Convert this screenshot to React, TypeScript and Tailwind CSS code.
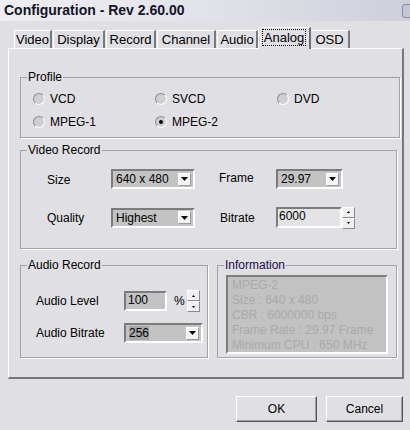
import React from 'react';

const tabs = [
  { label: 'Video', w: 38 },
  { label: 'Display', w: 52 },
  { label: 'Record', w: 50 },
  { label: 'Channel', w: 59 },
  { label: 'Audio', w: 41 },
  { label: 'Analog', w: 53, active: true },
  { label: 'OSD', w: 40 },
];

const Radio = ({ label, checked }: { label: string; checked?: boolean }) => (
  <div className="flex items-center h-[17px]">
    <div className="w-[12px] h-[12px] rounded-full border border-t-[#8c8c8c] border-l-[#8c8c8c] border-b-white border-r-white bg-[#cfcfd2] flex items-center justify-center">
      {checked && <div className="w-[4px] h-[4px] rounded-full bg-black" />}
    </div>
    <span className="ml-[5px]">{label}</span>
  </div>
);

const Arrow = () => (
  <div className="w-[13px] h-[13px] bg-[#f4f4f4] border border-t-white border-l-white border-b-[#9a9a9a] border-r-[#9a9a9a] flex items-center justify-center">
    <svg width="7" height="4" viewBox="0 0 7 4"><path d="M0 0h7L3.5 4z" fill="#000" /></svg>
  </div>
);

const Combo = ({ value, w, selected }: { value: string; w: number; selected?: boolean }) => (
  <div
    className="h-[20px] border-2 border-t-[#7c7c7c] border-l-[#7c7c7c] border-b-white border-r-white bg-[#c3c3c3] flex items-center justify-between pl-[3px] pr-[2px]"
    style={{ width: w }}
  >
    <span className={selected ? 'bg-[#a6a6a6] leading-[14px]' : 'leading-[14px]'}>{value}</span>
    <Arrow />
  </div>
);

const Spin = () => (
  <div className="flex flex-col w-[13px] shrink-0">
    {[0, 1].map((i) => (
      <div key={i} className="h-[11px] bg-[#f0f0f0] border border-t-white border-l-white border-b-[#8a8a8a] border-r-[#8a8a8a] flex items-center justify-center">
        <svg width="3" height="2" viewBox="0 0 3 2">
          <path d={i === 0 ? 'M0 2h3L1.5 0z' : 'M0 0h3L1.5 2z'} fill="#000" />
        </svg>
      </div>
    ))}
  </div>
);

const Group = ({ title, className, children, titleClass }: { title: string; className?: string; children: React.ReactNode; titleClass?: string }) => (
  <fieldset className={`border border-[#a2a2a6] shadow-[1px_1px_0_#ffffff] shrink-0 ${className ?? ''}`}>
    <legend className={`ml-[6px] px-[1px] leading-[14px] ${titleClass ?? ''}`}>{title}</legend>
    {children}
  </fieldset>
);

export default function App() {
  return (
    <div className="w-[410px] h-[430px] overflow-hidden bg-[#e0dfe3] text-[12px] text-black font-['Liberation_Sans',Arial,sans-serif]">
      <div className="h-[21px] bg-gradient-to-r from-[#eeeef2] via-[#e2e2ea] to-[#cfcfda] flex items-center justify-between pl-[4px]">
        <span className="font-bold text-[14px] text-[#141428]">Configuration - Rev 2.60.00</span>
        <div className="w-[14px] h-[14px] rounded-[3px] border border-[#8a8aa6] bg-[#c6c6d6] mr-[-6px]" />
      </div>

      <div className="flex items-end h-[27px] pl-[14px] pt-[6px]">
        {tabs.map((t) =>
          t.active ? (
            <div
              key={t.label}
              className="h-[22px] -mb-[1px] mx-[-1px] relative z-10 bg-[#e0dfe3] border-t border-l border-t-white border-l-white border-r-2 border-r-[#6e6e6e] flex items-start justify-center pt-[2px] text-[13px]"
              style={{ width: t.w }}
            >
              <span className="outline outline-1 outline-dotted outline-black px-[1px] leading-[15px]">{t.label}</span>
            </div>
          ) : (
            <div
              key={t.label}
              className="h-[18px] mr-[1px] border-t border-l border-t-white border-l-white border-r-2 border-r-[#7a7a7a] flex items-center justify-center text-[13px]"
              style={{ width: t.w }}
            >
              {t.label}
            </div>
          )
        )}
      </div>

      <div className="ml-[8px] w-[396px] h-[331px] border-t border-l border-t-white border-l-white border-r-2 border-b-2 border-r-[#777777] border-b-[#777777] pl-[11px] pr-[5px] pt-[21px]">
        <Group title="Profile" className="h-[68px] w-[377px]">
          <div className="grid grid-cols-[122px_122px_122px] gap-y-[6px] pl-[12px] pt-[6px]">
            <Radio label="VCD" />
            <Radio label="SVCD" />
            <Radio label="DVD" />
            <Radio label="MPEG-1" />
            <Radio label="MPEG-2" checked />
          </div>
        </Group>

        <Group title="Video Record" className="mt-[5px] h-[106px] w-[377px]">
          <div className="pl-[26px] pt-[12px] flex flex-col gap-[18px]">
            <div className="flex items-center h-[20px]">
              <span className="w-[64px] mt-[2px]">Size</span>
              <Combo value="640 x 480" w={84} />
              <span className="w-[57px] ml-[24px] -mt-[2px]">Frame</span>
              <Combo value="29.97" w={67} />
            </div>
            <div className="flex items-center h-[21px]">
              <span className="w-[64px]">Quality</span>
              <Combo value="Highest" w={84} />
              <span className="w-[56px] ml-[25px]">Bitrate</span>
              <div className="w-[66px] h-[21px] border-2 border-t-[#7c7c7c] border-l-[#7c7c7c] border-b-white border-r-white bg-[#e4e4e6] pl-[1px] leading-[14px]">6000</div>
              <Spin />
            </div>
          </div>
        </Group>

        <div className="flex gap-[9px] mt-[9px]">
          <Group title="Audio Record" className="w-[188px] h-[100px]">
            <div className="pl-[15px] pt-[18px]">
              <div className="flex items-center">
                <span className="w-[88px]">Audio Level</span>
                <div className="w-[43px] h-[20px] border-2 border-t-[#7c7c7c] border-l-[#7c7c7c] border-b-white border-r-white bg-[#c3c3c3] pl-[2px] leading-[15px]">100</div>
                <span className="ml-[7px] w-[13px]">%</span>
                <Spin />
              </div>
              <div className="flex items-center mt-[11px]">
                <span className="w-[88px]">Audio Bitrate</span>
                <Combo value="256" w={79} selected />
              </div>
            </div>
          </Group>

          <Group title="Information" titleClass="text-[#1c0a4e]" className="w-[180px] h-[100px]">
            <div className="mx-[8px] mt-[3px] h-[79px] border-2 border-t-[#7e7e7e] border-l-[#7e7e7e] border-b-white border-r-white bg-[#c2c2c2] text-[#a9a9ab] pl-[4px] pt-[1px] leading-[15px]">
              <div>MPEG-2</div>
              <div>Size : 640 x 480</div>
              <div>CBR : 6000000 bps</div>
              <div>Frame Rate : 29.97 Frame</div>
              <div>Minimum CPU : 650 MHz</div>
            </div>
          </Group>
        </div>
      </div>

      <div className="flex justify-end gap-[9px] mt-[17px] pr-[7px]">
        <button className="w-[81px] h-[26px] bg-[#e0dfe3] border border-t-white border-l-white border-b-[#555] border-r-[#555] shadow-[inset_-1px_-1px_0_#a0a0a0]">OK</button>
        <button className="w-[77px] h-[26px] bg-[#e0dfe3] border border-t-white border-l-white border-b-[#555] border-r-[#555] shadow-[inset_-1px_-1px_0_#a0a0a0]">Cancel</button>
      </div>
    </div>
  );
}
